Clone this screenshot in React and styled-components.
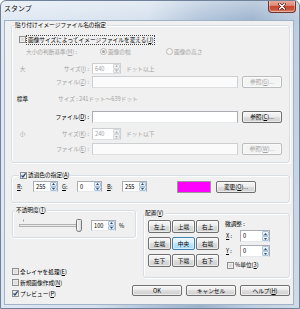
import React from "react";
import styled, { createGlobalStyle } from "styled-components";

const FONT = `"Noto Sans CJK JP", "Noto Sans", sans-serif`;

const GlobalStyle = createGlobalStyle`
  html, body { margin: 0; padding: 0; background: #ffffff; }
  *, *::before, *::after { box-sizing: border-box; }
  body { font-family: ${FONT}; }
`;

const Window = styled.div`
  width: 300px;
  height: 309px;
  display: flex;
  flex-direction: column;
  padding: 0 5px 3px 3px;
  border: 1px solid #6f8299;
  border-radius: 6px 6px 0 0;
  background:
    linear-gradient(to bottom, rgba(255,255,255,0.35), rgba(255,255,255,0) 20px),
    linear-gradient(100deg, #e1e9f3 0%, #d6e1ee 42%, #b0c4da 58%, #9db4cd 72%, #bfcfe1 86%, #cfdbe8 100%);
  font-family: ${FONT};
  font-size: 5.7px;
  line-height: 8px;
  color: #000;
  overflow: hidden;
`;

const TitleBar = styled.div`
  height: 19px;
  flex-shrink: 0;
  display: flex;
  align-items: flex-start;
  justify-content: space-between;
`;

const Title = styled.div`
  padding-top: 3px;
  font-size: 7px;
  line-height: 9px;
  color: #111;
  text-shadow: 0 0 3px rgba(255,255,255,0.9);
`;

const CloseButton = styled.div`
  width: 28px;
  height: 13px;
  margin: -1px -2px 0 0;
  border: 1px solid #70352b;
  border-top: none;
  border-radius: 0 0 4px 4px;
  background: linear-gradient(#eab0a3 0%, #de8a77 45%, #c7452e 52%, #c9573f 80%, #e0917a 100%);
  box-shadow: inset 0 0 0 1px rgba(255,255,255,0.35);
  display: flex;
  align-items: center;
  justify-content: center;
`;

const Client = styled.div`
  flex: 1;
  background: #f0f0f0;
  border: 1px solid #a0b3c8;
  padding: 4px 3px 0 6px;
  display: flex;
  flex-direction: column;
`;

const Group = styled.div`
  position: relative;
  flex-shrink: 0;
  height: ${(p) => p.$h}px;
  width: ${(p) => (p.$w ? `${p.$w}px` : "auto")};
  margin: ${(p) => p.$m || "0"};
  padding: ${(p) => p.$pad};
  border: 1px solid #d5dfe5;
  border-radius: 3px;
  box-shadow: inset 1px 1px 0 #ffffff, 1px 1px 0 #ffffff;
`;

const Legend = styled.div`
  position: absolute;
  top: -5px;
  left: ${(p) => p.$left}px;
  height: 8px;
  padding: 0 1px;
  background: #f0f0f0;
  display: flex;
  align-items: center;
  gap: 1px;
  white-space: nowrap;
`;

const Row = styled.div`
  display: flex;
  align-items: center;
  height: ${(p) => p.$h}px;
  margin-top: ${(p) => p.$mt || 0}px;
  padding-left: ${(p) => p.$pl || 0}px;
  white-space: nowrap;
`;

const Label = styled.span`
  display: inline-block;
  flex-shrink: 0;
  white-space: nowrap;
  color: ${(p) => (p.$dim ? "#a3a3a3" : "#000")};
  margin-left: ${(p) => p.$ml || 0}px;
  width: ${(p) => (p.$w ? `${p.$w}px` : "auto")};
  text-align: ${(p) => p.$align || "left"};
`;

const FocusLabel = styled.span`
  margin-left: 1px;
  padding: 0 1px;
  outline: 1px dotted #444;
  outline-offset: 0;
  line-height: 8px;
`;

const U = styled.span`
  text-decoration: underline;
  text-underline-offset: 1px;
`;

const TextBox = styled.div`
  flex-shrink: 0;
  width: ${(p) => p.$w}px;
  height: ${(p) => p.$h}px;
  margin-left: ${(p) => p.$ml || 0}px;
  background: ${(p) => (p.$dim ? "#fbfbfb" : "#ffffff")};
  border: 1px solid ${(p) => (p.$dim ? "#cdd0d3" : "#abadb3")};
  border-bottom-color: ${(p) => (p.$dim ? "#dcdfe2" : "#e3e9ef")};
`;

const Button = styled.div`
  flex-shrink: 0;
  width: ${(p) => p.$w}px;
  height: ${(p) => p.$h}px;
  margin-left: ${(p) => p.$ml || 0}px;
  display: flex;
  align-items: center;
  justify-content: center;
  white-space: nowrap;
  border: 1px solid ${(p) => (p.$dim ? "#b9bdc0" : p.$active ? "#3c7fb1" : "#707070")};
  border-radius: 2px;
  color: ${(p) => (p.$dim ? "#a3a3a3" : "#000")};
  background: ${(p) =>
    p.$dim
      ? "#f4f4f4"
      : p.$active
      ? "linear-gradient(#eaf6fd 0%, #d9f0fc 49%, #bee6fd 50%, #a7d9f5 100%)"
      : "linear-gradient(#f6f6f6 0%, #ebebeb 49%, #dddddd 50%, #cfcfcf 100%)"};
  box-shadow: inset 0 0 0 1px rgba(255, 255, 255, 0.55);
`;

const SpinFrame = styled.div`
  flex-shrink: 0;
  display: flex;
  width: ${(p) => p.$w}px;
  height: ${(p) => p.$h}px;
  margin-left: ${(p) => p.$ml || 0}px;
  background: #ffffff;
  border: 1px solid ${(p) => (p.$dim ? "#cdd0d3" : "#abadb3")};
  border-bottom-color: ${(p) => (p.$dim ? "#dcdfe2" : "#e3e9ef")};
`;

const SpinValue = styled.span`
  flex: 1;
  padding-left: 2px;
  display: flex;
  align-items: center;
  color: ${(p) => (p.$dim ? "#a3a3a3" : "#000")};
`;

const SpinArrows = styled.div`
  width: 7px;
  display: flex;
  flex-direction: column;
`;

const SpinArrow = styled.div`
  flex: 1;
  display: flex;
  align-items: center;
  justify-content: center;
  border: 1px solid ${(p) => (p.$dim ? "#d5d8da" : "#aac3dd")};
  border-radius: 1px;
  background: ${(p) =>
    p.$dim ? "#f2f2f2" : "linear-gradient(#f4f9fe, #d4e4f4)"};
`;

const Swatch = styled.div`
  flex-shrink: 0;
  width: ${(p) => p.$w}px;
  height: ${(p) => p.$h}px;
  margin-left: ${(p) => p.$ml || 0}px;
  background: ${(p) => p.$color};
  border: 1px solid #9a9a9a;
`;

const ColA = styled.span`
  flex-shrink: 0;
  width: 21px;
  text-align: center;
  color: ${(p) => (p.$dim ? "#a3a3a3" : "#000")};
`;

const ColB = styled.span`
  flex-shrink: 0;
  width: 56px;
  text-align: right;
  color: ${(p) => (p.$dim ? "#a3a3a3" : "#000")};
`;

const RadioOption = styled.span`
  flex-shrink: 0;
  display: flex;
  align-items: center;
  gap: 1px;
  width: ${(p) => p.$w}px;
  color: #a3a3a3;
`;

const Middle = styled.div`
  display: grid;
  grid-template-columns: 120px 1fr;
  margin-top: 7px;
`;

const Column = styled.div`
  display: flex;
  flex-direction: column;
  min-width: 0;
`;

const Checks = styled.div`
  margin-top: 28px;
  padding-left: 1px;
  display: flex;
  flex-direction: column;
`;

const CheckRow = styled.div`
  height: 11px;
  display: flex;
  align-items: center;
  gap: 1px;
  white-space: nowrap;
`;

const PlaceBody = styled.div`
  display: flex;
  align-items: flex-start;
`;

const PlaceGrid = styled.div`
  display: grid;
  grid-template-columns: repeat(3, 23px);
  grid-auto-rows: 13px;
  column-gap: 1px;
  row-gap: 4px;
`;

const Adjust = styled.div`
  margin-left: 6px;
  display: flex;
  flex-direction: column;
`;

const ButtonBar = styled.div`
  margin-top: 7px;
  display: flex;
  justify-content: flex-end;
  gap: 4px;
`;

const IconSvg = styled.svg`
  display: block;
  flex-shrink: 0;
`;

function CheckBox({ checked }) {
  return (
    <IconSvg width="7" height="7" viewBox="0 0 7 7">
      <rect x="0.5" y="0.5" width="6" height="6" fill="#f6f6f6" stroke="#8e8f8f" />
      <rect x="1.5" y="1.5" width="4" height="4" fill="#dedede" />
      {checked && (
        <path d="M1.5 3.5 L2.9 5 L5.6 1.4" stroke="#21407e" strokeWidth="1.2" fill="none" />
      )}
    </IconSvg>
  );
}

function Radio({ selected }) {
  return (
    <IconSvg width="7" height="7" viewBox="0 0 7 7">
      <circle cx="3.5" cy="3.5" r="3" fill="#f4f4f4" stroke="#b9b9b9" />
      {selected && <circle cx="3.5" cy="3.5" r="1.5" fill="#a7a7a7" />}
    </IconSvg>
  );
}

function Arrow({ up, dim }) {
  return (
    <IconSvg width="3" height="2" viewBox="0 0 3 2">
      <path d={up ? "M0 2 L1.5 0 L3 2 Z" : "M0 0 L1.5 2 L3 0 Z"} fill={dim ? "#b5b5b5" : "#3a4a5e"} />
    </IconSvg>
  );
}

function Spin({ value, w, h, ml, dim }) {
  return (
    <SpinFrame $w={w} $h={h} $ml={ml} $dim={dim}>
      <SpinValue $dim={dim}>{value}</SpinValue>
      <SpinArrows>
        <SpinArrow $dim={dim}>
          <Arrow up dim={dim} />
        </SpinArrow>
        <SpinArrow $dim={dim}>
          <Arrow dim={dim} />
        </SpinArrow>
      </SpinArrows>
    </SpinFrame>
  );
}

function Slider() {
  return (
    <IconSvg width="64" height="13" viewBox="0 0 64 13">
      <line x1="4.5" y1="0.5" x2="4.5" y2="2.5" stroke="#a0a0a0" />
      <rect x="0.5" y="5.5" width="59" height="2" fill="#e7eaea" stroke="#b2b2b2" />
      <defs>
        <linearGradient id="thumbG" x1="0" y1="0" x2="1" y2="0">
          <stop offset="0" stopColor="#fbfbfb" />
          <stop offset="1" stopColor="#d9d9d9" />
        </linearGradient>
      </defs>
      <path
        d="M57.5 1.5 Q57.5 0.5 58.5 0.5 H61.5 Q62.5 0.5 62.5 1.5 V10.5 Q62.5 12.5 60 12.5 Q57.5 12.5 57.5 10.5 Z"
        fill="url(#thumbG)"
        stroke="#787878"
      />
    </IconSvg>
  );
}

function CloseGlyph() {
  return (
    <IconSvg width="8" height="7" viewBox="0 0 8 7">
      <path d="M1.5 1 L6.5 6 M6.5 1 L1.5 6" stroke="#4a1d16" strokeWidth="2.6" strokeLinecap="round" />
      <path d="M1.5 1 L6.5 6 M6.5 1 L1.5 6" stroke="#ffffff" strokeWidth="1.4" strokeLinecap="round" />
    </IconSvg>
  );
}

const placeButtons = ["左上", "上端", "右上", "左端", "中央", "右端", "左下", "下端", "右下"];

export default function App() {
  return (
    <>
      <GlobalStyle />
      <Window>
        <TitleBar>
          <Title>スタンプ</Title>
          <CloseButton>
            <CloseGlyph />
          </CloseButton>
        </TitleBar>
        <Client>
          <Group $h={138} $pad="9px 7px 7px 0">
            <Legend $left={2}>
              <Label>貼り付けイメージファイル名の指定</Label>
            </Legend>
            <Row $h={9} $pl={7}>
              <CheckBox />
              <FocusLabel>
                画像サイズによってイメージファイルを変える(<U>J</U>)
              </FocusLabel>
            </Row>
            <Row $h={9} $mt={3} $pl={14}>
              <Label $dim $w={74}>
                大小の判断基準(<U>M</U>) :
              </Label>
              <RadioOption $w={66}>
                <Radio selected />
                画像の幅
              </RadioOption>
              <RadioOption $w={60}>
                <Radio />
                画像の高さ
              </RadioOption>
            </Row>
            <Row $h={11} $mt={7}>
              <ColA $dim>大</ColA>
              <ColB $dim>
                サイズ(<U>I</U>) :
              </ColB>
              <Spin value="640" w={29} h={11} ml={3} dim />
              <Label $dim $ml={5}>
                ドット以上
              </Label>
            </Row>
            <Row $h={12} $mt={2}>
              <ColA />
              <ColB $dim>
                ファイル(<U>Z</U>) :
              </ColB>
              <TextBox $w={146} $h={12} $ml={3} $dim />
              <Button $w={40} $h={12} $ml={4} $dim>
                参照(<U>G</U>)...
              </Button>
            </Row>
            <Row $h={9} $mt={6}>
              <ColA>標準</ColA>
              <Label $dim $ml={25}>
                サイズ : 241ドット～639ドット
              </Label>
            </Row>
            <Row $h={12} $mt={8}>
              <ColA />
              <ColB>
                ファイル(<U>D</U>) :
              </ColB>
              <TextBox $w={146} $h={12} $ml={3} />
              <Button $w={40} $h={12} $ml={4}>
                参照(<U>C</U>)...
              </Button>
            </Row>
            <Row $h={12} $mt={5}>
              <ColA $dim>小</ColA>
              <ColB $dim>
                サイズ(<U>K</U>) :
              </ColB>
              <Spin value="240" w={29} h={12} ml={3} dim />
              <Label $dim $ml={5}>
                ドット以下
              </Label>
            </Row>
            <Row $h={12} $mt={3}>
              <ColA />
              <ColB $dim>
                ファイル(<U>E</U>) :
              </ColB>
              <TextBox $w={146} $h={12} $ml={3} $dim />
              <Button $w={40} $h={12} $ml={4} $dim>
                参照(<U>W</U>)...
              </Button>
            </Row>
          </Group>

          <Group $h={28} $m="12px 0 0 0" $pad="5px 0 10px 5px">
            <Legend $left={7}>
              <CheckBox checked />
              <Label>
                透過色の指定(<U>A</U>)
              </Label>
            </Legend>
            <Row $h={11}>
              <Label $w={16}>
                <U>R</U>:
              </Label>
              <Spin value="255" w={25} h={11} />
              <Label $w={15} $ml={4}>
                <U>G</U>:
              </Label>
              <Spin value="0" w={25} h={11} />
              <Label $w={15} $ml={5}>
                <U>B</U>:
              </Label>
              <Spin value="255" w={25} h={11} />
              <Swatch $w={34} $h={12} $ml={30} $color="#ff00ff" />
              <Button $w={40} $h={12} $ml={5}>
                変更(<U>O</U>)...
              </Button>
            </Row>
          </Group>

          <Middle>
            <Column>
              <Group $h={28} $w={124} $m="0 0 0 1px" $pad="8px 0 5px 6px">
                <Legend $left={2}>
                  <Label>
                    不透明度(<U>T</U>)
                  </Label>
                </Legend>
                <Row $h={13}>
                  <Slider />
                  <Spin value="100" w={25} h={11} ml={8} />
                  <Label $ml={3}>%</Label>
                </Row>
              </Group>
              <Checks>
                <CheckRow>
                  <CheckBox />
                  <Label>
                    全レイヤを処理(<U>E</U>)
                  </Label>
                </CheckRow>
                <CheckRow>
                  <CheckBox />
                  <Label>
                    新規画像作成(<U>N</U>)
                  </Label>
                </CheckRow>
                <CheckRow>
                  <CheckBox checked />
                  <Label>
                    プレビュー(<U>P</U>)
                  </Label>
                </CheckRow>
              </Checks>
            </Column>
            <Column>
              <Group $h={65} $m="3px 0 0 12px" $pad="6px 0 0 4px">
                <Legend $left={0}>
                  <Label>
                    配置(<U>V</U>)
                  </Label>
                </Legend>
                <PlaceBody>
                  <PlaceGrid>
                    {placeButtons.map((t) => (
                      <Button key={t} $w={23} $h={13} $active={t === "中央"}>
                        {t}
                      </Button>
                    ))}
                  </PlaceGrid>
                  <Adjust>
                    <Row $h={8}>
                      <Label>微調整 :</Label>
                    </Row>
                    <Row $h={12} $mt={2} $pl={1}>
                      <Label $w={14}>
                        <U>X</U> :
                      </Label>
                      <Spin value="0" w={30} h={12} />
                    </Row>
                    <Row $h={12} $mt={3} $pl={1}>
                      <Label $w={14}>
                        <U>Y</U> :
                      </Label>
                      <Spin value="0" w={30} h={12} />
                    </Row>
                    <Row $h={8} $mt={4} $pl={2}>
                      <CheckBox />
                      <Label $ml={1}>
                        %単位(<U>3</U>)
                      </Label>
                    </Row>
                  </Adjust>
                </PlaceBody>
              </Group>
              <ButtonBar>
                <Button $w={50} $h={11}>
                  OK
                </Button>
                <Button $w={50} $h={11}>
                  キャンセル
                </Button>
                <Button $w={50} $h={11}>
                  ヘルプ(<U>H</U>)
                </Button>
              </ButtonBar>
            </Column>
          </Middle>
        </Client>
      </Window>
    </>
  );
}
